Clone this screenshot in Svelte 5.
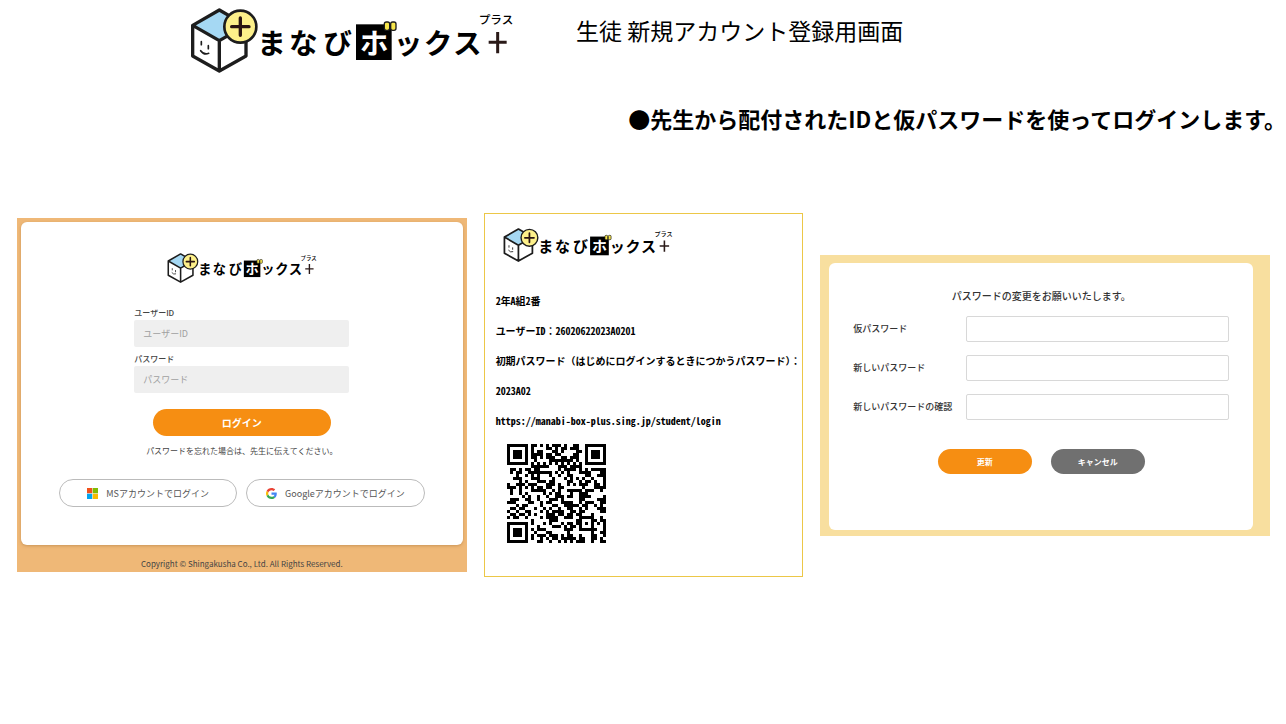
<script>
  const loginUrl = 'https://manabi-box-plus.sing.jp/student/login';

  // QR symbol, version 4 with error correction level Q and mask 0:
  // 33 modules a side, two blocks of 24 data and 26 correction bytes.
  const SIZE = 33;
  const BLOCKS = 2;
  const DATA_BYTES = 24;
  const ECC_BYTES = 26;
  const FORMAT_BITS = 0b011010101011111;

  function multiply(a, b) {
    let z = 0;
    for (let i = 7; i >= 0; i--) {
      z = (z << 1) ^ ((z >>> 7) * 0x11d);
      z ^= ((b >>> i) & 1) * a;
    }
    return z;
  }

  function divisor(degree) {
    const out = new Array(degree).fill(0);
    out[degree - 1] = 1;
    let root = 1;
    for (let i = 0; i < degree; i++) {
      for (let j = 0; j < degree; j++) {
        out[j] = multiply(out[j], root);
        if (j + 1 < degree) out[j] ^= out[j + 1];
      }
      root = multiply(root, 2);
    }
    return out;
  }

  function remainder(data, div) {
    const out = div.map(() => 0);
    for (const b of data) {
      const factor = b ^ out.shift();
      out.push(0);
      div.forEach((c, i) => (out[i] ^= multiply(c, factor)));
    }
    return out;
  }

  function codewords(text) {
    const bits = [];
    const push = (value, n) => {
      for (let i = n - 1; i >= 0; i--) bits.push((value >>> i) & 1);
    };
    push(4, 4);
    push(text.length, 8);
    for (const ch of text) push(ch.charCodeAt(0), 8);
    push(0, 4);
    const bytes = [];
    for (let i = 0; i < bits.length; i += 8) bytes.push(parseInt(bits.slice(i, i + 8).join(''), 2));
    for (let pad = 0xec; bytes.length < BLOCKS * DATA_BYTES; pad ^= 0xfd) bytes.push(pad);

    const div = divisor(ECC_BYTES);
    const data = [];
    const ecc = [];
    for (let b = 0; b < BLOCKS; b++) {
      data.push(bytes.slice(b * DATA_BYTES, (b + 1) * DATA_BYTES));
      ecc.push(remainder(data[b], div));
    }
    const out = [];
    for (let i = 0; i < DATA_BYTES; i++) data.forEach((d) => out.push(d[i]));
    for (let i = 0; i < ECC_BYTES; i++) ecc.forEach((e) => out.push(e[i]));
    return out;
  }

  function qrPath(text) {
    const grid = Array.from({ length: SIZE }, () => new Array(SIZE).fill(null));
    const set = (x, y, on) => {
      if (x >= 0 && y >= 0 && x < SIZE && y < SIZE) grid[y][x] = !!on;
    };

    for (let i = 0; i < SIZE; i++) {
      set(6, i, i % 2 === 0);
      set(i, 6, i % 2 === 0);
    }
    for (const [cx, cy] of [[3, 3], [SIZE - 4, 3], [3, SIZE - 4]]) {
      for (let dy = -4; dy <= 4; dy++) {
        for (let dx = -4; dx <= 4; dx++) {
          const d = Math.max(Math.abs(dx), Math.abs(dy));
          set(cx + dx, cy + dy, d !== 2 && d !== 4);
        }
      }
    }
    for (let dy = -2; dy <= 2; dy++) {
      for (let dx = -2; dx <= 2; dx++) {
        set(26 + dx, 26 + dy, Math.max(Math.abs(dx), Math.abs(dy)) !== 1);
      }
    }

    const bit = (i) => (FORMAT_BITS >>> i) & 1;
    for (let i = 0; i <= 5; i++) set(8, i, bit(i));
    set(8, 7, bit(6));
    set(8, 8, bit(7));
    set(7, 8, bit(8));
    for (let i = 9; i < 15; i++) set(14 - i, 8, bit(i));
    for (let i = 0; i < 8; i++) set(SIZE - 1 - i, 8, bit(i));
    for (let i = 8; i < 15; i++) set(8, SIZE - 15 + i, bit(i));
    set(8, SIZE - 8, true);

    const words = codewords(text);
    let n = 0;
    for (let right = SIZE - 1; right >= 1; right -= 2) {
      if (right === 6) right = 5;
      for (let v = 0; v < SIZE; v++) {
        for (let j = 0; j < 2; j++) {
          const x = right - j;
          const y = ((right + 1) & 2) === 0 ? SIZE - 1 - v : v;
          if (grid[y][x] !== null) continue;
          const on = n < words.length * 8 ? (words[n >>> 3] >>> (7 - (n & 7))) & 1 : 0;
          n++;
          grid[y][x] = (x + y) % 2 === 0 ? !on : !!on;
        }
      }
    }

    let d = '';
    grid.forEach((row, y) => row.forEach((on, x) => on && (d += `M${x} ${y}h1v1h-1z`)));
    return d;
  }

  const qr = qrPath(loginUrl);

  const resetFields = [
    { id: 'temporary', label: '仮パスワード' },
    { id: 'new', label: '新しいパスワード' },
    { id: 'confirm', label: '新しいパスワードの確認' }
  ];
</script>

{#snippet logo()}
  <svg class="logo" viewBox="30 24 972 195" role="img" aria-label="まなびボックスプラス">
    <path d="M118 30 198 76V168L118 213 38 168V76Z" fill="#fff" />
    <path d="M118 30 198 76 118 122 38 76Z" fill="#a5d8f3" />
    <path d="M118 30 198 76V168L118 213 38 168V76ZM38 76 118 122 198 76M118 122V213" fill="none" stroke="#1d1d1d" stroke-width="10" stroke-linejoin="round" />
    <path d="M64 125v9M85 137v9M62 152q10 14 24 8" fill="none" stroke="#1d1d1d" stroke-width="5" stroke-linecap="round" />
    <circle cx="181" cy="80" r="48" fill="#fdf08a" stroke="#1d1d1d" stroke-width="8" />
    <path d="M181 54V106M155 80H207" stroke="#2a1512" stroke-width="10" stroke-linecap="round" />
    <rect x="528" y="73" width="107" height="107" />
    <g class="name">
      <text x="275" y="163">ま</text>
      <text x="370" y="163">な</text>
      <text x="473" y="163">び</text>
      <text x="582" y="163" fill="#fff">ホ</text>
      <text x="684" y="163">ッ</text>
      <text x="774" y="163">ク</text>
      <text x="862" y="163">ス</text>
    </g>
    <rect x="613" y="66" width="16" height="25" rx="6" fill="#f7e64b" stroke="#1d1d1d" stroke-width="4" />
    <rect x="632" y="66" width="16" height="25" rx="6" fill="#f7e64b" stroke="#1d1d1d" stroke-width="4" />
    <text class="ruby" x="948" y="72">プラス</text>
    <path d="M953 96V160M926 127H980" stroke="#2a1a18" stroke-width="9" />
  </svg>
{/snippet}

<div class="page">
  <header>
    <div class="brand">{@render logo()}</div>
    <h1>生徒 新規アカウント登録用画面</h1>
  </header>
  <h2>●先生から配付されたIDと仮パスワードを使ってログインします。</h2>

  <main>
    <section class="login">
      <form class="card">
        <div class="brand">{@render logo()}</div>
        <div class="fields">
          <label for="user-id">ユーザーID</label>
          <input id="user-id" type="text" placeholder="ユーザーID" />
          <label for="password">パスワード</label>
          <input id="password" type="password" placeholder="パスワード" />
        </div>
        <button class="primary" type="button">ログイン</button>
        <p>パスワードを忘れた場合は、先生に伝えてください。</p>
        <div class="providers">
          <button type="button">
            <svg viewBox="0 0 23 23" aria-hidden="true">
              <path fill="#f1511b" d="M0 0h11v11H0z" />
              <path fill="#80bb03" d="M12 0h11v11H12z" />
              <path fill="#03a5f0" d="M0 12h11v11H0z" />
              <path fill="#fbb901" d="M12 12h11v11H12z" />
            </svg>
            MSアカウントでログイン
          </button>
          <button type="button">
            <svg viewBox="0 0 48 48" aria-hidden="true">
              <path fill="#ea4335" d="M24 9.5c3.54 0 6.71 1.22 9.21 3.6l6.85-6.85C35.9 2.38 30.47 0 24 0 14.62 0 6.51 5.38 2.56 13.22l7.98 6.19C12.43 13.72 17.74 9.5 24 9.5z" />
              <path fill="#4285f4" d="M46.98 24.55c0-1.57-.15-3.09-.38-4.55H24v9.02h12.94c-.58 2.96-2.26 5.48-4.78 7.18l7.73 6c4.51-4.18 7.09-10.36 7.09-17.65z" />
              <path fill="#fbbc05" d="M10.53 28.59c-.48-1.45-.76-2.99-.76-4.59s.27-3.14.76-4.59l-7.98-6.19C.92 16.46 0 20.12 0 24c0 3.88.92 7.54 2.56 10.78l7.97-6.19z" />
              <path fill="#34a853" d="M24 48c6.48 0 11.93-2.13 15.89-5.81l-7.73-6c-2.15 1.45-4.92 2.3-8.16 2.3-6.26 0-11.57-4.22-13.47-9.91l-7.98 6.19C6.51 42.62 14.62 48 24 48z" />
            </svg>
            Googleアカウントでログイン
          </button>
        </div>
      </form>
      <footer>Copyright © Shingakusha Co., Ltd. All Rights Reserved.</footer>
    </section>

    <section class="slip">
      <div class="brand">{@render logo()}</div>
      <p>2年A組2番</p>
      <p>ユーザーID：26020622023A0201</p>
      <p>初期パスワード（はじめにログインするときにつかうパスワード）：</p>
      <p>2023A02</p>
      <p>{loginUrl}</p>
      <svg class="qr" viewBox="0 0 33 33" shape-rendering="crispEdges" aria-hidden="true">
        <path d={qr} />
      </svg>
    </section>

    <section class="reset">
      <form class="card">
        <h3>パスワードの変更をお願いいたします。</h3>
        {#each resetFields as field (field.id)}
          <div class="row">
            <label for={field.id}>{field.label}</label>
            <input id={field.id} type="password" />
          </div>
        {/each}
        <div class="actions">
          <button class="primary" type="button">更新</button>
          <button class="cancel" type="button">キャンセル</button>
        </div>
      </form>
    </section>
  </main>
</div>

<style>
  :global(body) {
    margin: 0;
    background: #fff;
  }

  .page {
    min-height: 100vh;
    box-sizing: border-box;
    padding-top: 8px;
    color: #000;
    font-family: 'Noto Sans CJK JP', sans-serif;
  }

  h1,
  h2,
  h3,
  p {
    margin: 0;
  }

  button,
  input {
    box-sizing: border-box;
    font-family: inherit;
  }

  header {
    display: flex;
    gap: 62px;
    padding-left: 190px;
  }

  header .brand {
    width: 324px;
  }

  .logo {
    display: block;
    width: 100%;
  }

  .logo text {
    text-anchor: middle;
  }

  .name {
    font-size: 86px;
    font-weight: 700;
  }

  .ruby {
    font-size: 35px;
    font-weight: 500;
  }

  h1 {
    padding-top: 7px;
    font-size: 23px;
    font-weight: 400;
    line-height: 30px;
    white-space: nowrap;
  }

  h2 {
    margin-top: 30px;
    font-size: 22px;
    font-weight: 700;
    line-height: 30px;
    text-align: right;
    white-space: nowrap;
  }

  main {
    display: grid;
    grid-template-columns: minmax(0, 450fr) minmax(0, 320fr) minmax(0, 450fr);
    align-items: center;
    gap: 17px;
    margin-top: 80px;
    padding: 0 16px 0 17px;
  }

  section {
    box-sizing: border-box;
  }

  .card {
    display: flex;
    flex-direction: column;
    background: #fff;
    border-radius: 6px;
  }

  .primary {
    border: 0;
    border-radius: 16px;
    background: #f68e12;
    color: #fff;
    font-weight: 700;
  }

  .login {
    padding: 4px 4px 0;
    background: #efb877;
    color: #444;
    font-size: 8px;
    line-height: 14px;
  }

  .login .card {
    align-items: center;
    padding: 31px 38px 38px;
    box-shadow: 0 1px 3px #a8733a80;
  }

  .login .brand {
    width: 150px;
    margin-bottom: 23px;
  }

  .fields {
    display: flex;
    flex-direction: column;
    width: 215px;
    margin-bottom: 16px;
  }

  .fields label {
    font-weight: 500;
  }

  .fields input {
    height: 27px;
    padding: 0 9px;
    border: 0;
    border-radius: 2px;
    background: #efefef;
    font-size: 9px;
  }

  .fields input + label {
    margin-top: 5px;
  }

  .fields input::placeholder {
    color: #a0a0a0;
  }

  .login .primary {
    width: 178px;
    height: 27px;
    font-size: 10px;
  }

  .login p {
    margin: 8px 0 21px;
  }

  .providers {
    display: flex;
    align-self: stretch;
    gap: 9px;
  }

  .providers button {
    display: flex;
    flex: 1;
    align-items: center;
    justify-content: center;
    gap: 8px;
    height: 28px;
    padding: 0;
    border: 1px solid #bbb;
    border-radius: 14px;
    background: #fff;
    color: #555;
    font-size: 9px;
    white-space: nowrap;
  }

  .providers svg {
    width: 11px;
    height: 11px;
  }

  footer {
    padding: 12px 0 1px;
    text-align: center;
  }

  .slip {
    padding: 14px 0 32px 11px;
    border: 1px solid #ecc747;
    font-family: 'Noto Sans Mono CJK JP', 'Noto Sans CJK JP', monospace;
    font-size: 10px;
    font-weight: 700;
    line-height: 30px;
    white-space: nowrap;
  }

  .slip .brand {
    width: 170px;
    margin: 0 0 24px 7px;
    font-family: 'Noto Sans CJK JP', sans-serif;
  }

  .qr {
    display: block;
    width: 99px;
    height: 99px;
    margin: 8px 0 1px 11px;
  }

  .reset {
    padding: 8px 17px 6px 9px;
    background: #f8df9f;
    color: #333;
  }

  .reset .card {
    padding: 25px 24px 56px;
  }

  h3 {
    margin-bottom: 12px;
    font-size: 10px;
    font-weight: 500;
    line-height: 16px;
    text-align: center;
  }

  .row {
    display: flex;
    align-items: center;
    font-size: 9px;
    font-weight: 500;
  }

  .row + .row {
    margin-top: 13px;
  }

  .row label {
    width: 113px;
  }

  .row input {
    flex: 1;
    min-width: 0;
    height: 26px;
    border: 1px solid #d8d8d8;
    border-radius: 2px;
    background: #fff;
  }

  .actions {
    display: flex;
    justify-content: center;
    gap: 19px;
    margin-top: 29px;
  }

  .actions button {
    width: 94px;
    height: 25px;
    padding: 0;
    border: 0;
    border-radius: 13px;
    color: #fff;
    font-size: 8px;
    font-weight: 700;
  }

  .cancel {
    background: #707070;
  }
</style>
